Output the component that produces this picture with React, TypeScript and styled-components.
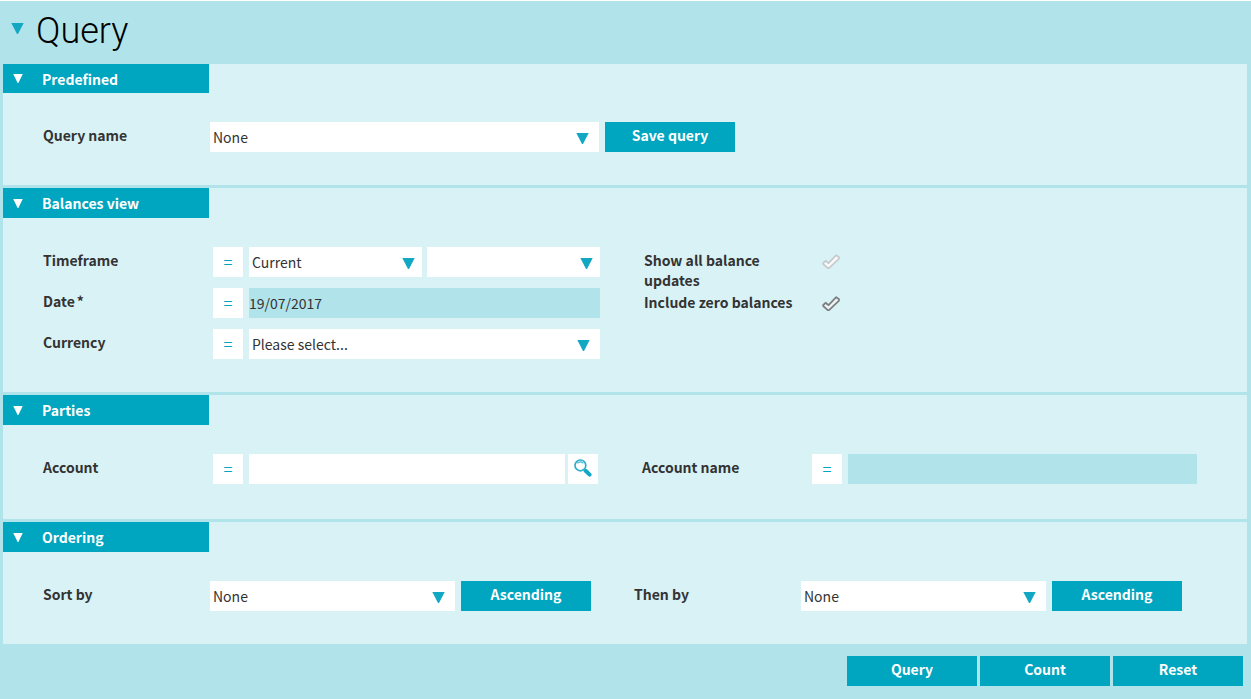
import React, { useId, useState } from "react";
import styled, { createGlobalStyle } from "styled-components";

const accent = "#00a5c0";
const pale = "#d9f2f6";
const tint = "#b1e4ea";

const GlobalStyle = createGlobalStyle`
  * { box-sizing: border-box; }
  body {
    margin: 0;
    background: ${tint};
    color: #333;
    font-family: "Noto Sans CJK SC", sans-serif;
    font-size: 14px;
    line-height: 20px;
  }
  button, input, select { font: inherit; color: inherit; border: 0; border-radius: 0; margin: 0; padding: 0; }
  button { cursor: pointer; }
`;

const Page = styled.form`
  min-height: 100vh;
  border-top: 1px solid #fff;
  background: ${tint};
`;

const TitleBar = styled.header`
  display: flex;
  align-items: flex-start;
  gap: 12px;
  height: 63px;
  padding-left: 11px;
`;

const TitleToggle = styled.button`
  display: flex;
  padding-top: 22px;
  background: none;
`;

const Title = styled.h1`
  margin: 0;
  padding-top: 8px;
  color: #000;
  font-family: Roboto, sans-serif;
  font-size: 36px;
  font-weight: 300;
  line-height: 44px;
`;

const Panels = styled.main`
  display: flex;
  flex-direction: column;
  gap: 3px;
  padding: 0 4px 0 3px;
`;

const Panel = styled.section`
  background: ${pale};
`;

const PanelHeading = styled.h2`
  margin: 0;
  font-size: 14px;
  line-height: 20px;
`;

const PanelToggle = styled.button<{ $compact?: boolean }>`
  display: flex;
  align-items: center;
  gap: 19px;
  width: 206px;
  height: ${(p) => (p.$compact ? 29 : 30)}px;
  padding-left: 10px;
  background: ${accent};
  color: #fff;
  font-weight: 700;
  text-align: left;
`;

const PanelBody = styled.div<{ $columns: string; $gap?: number; $end?: number; $bottom?: number }>`
  display: grid;
  grid-template-columns: ${(p) => p.$columns};
  column-gap: ${(p) => p.$gap ?? 44}px;
  padding: 29px ${(p) => p.$end ?? 0}px ${(p) => p.$bottom ?? 33}px 40px;
`;

const Stack = styled.div<{ $gap: number }>`
  display: flex;
  flex-direction: column;
  gap: ${(p) => p.$gap}px;
`;

const Field = styled.div`
  display: flex;
  align-items: flex-start;
  min-width: 0;
`;

const Label = styled.label<{ $width?: number }>`
  flex: none;
  width: ${(p) => p.$width ?? 167}px;
  padding-top: 3px;
  font-weight: 700;
`;

const Required = styled.span`
  margin-left: 2px;
`;

const Controls = styled.div<{ $gap?: number }>`
  display: flex;
  flex: 1;
  gap: ${(p) => p.$gap ?? 6}px;
  min-width: 0;
`;

const Operator = styled.button`
  flex: none;
  width: 30px;
  height: 30px;
  padding-bottom: 2px;
  background: #fff;
  color: ${accent};
  font-size: 16px;
`;

const TextInput = styled.input<{ $filled?: boolean }>`
  flex: 1;
  min-width: 0;
  width: 100%;
  height: 30px;
  background: ${(p) => (p.$filled ? tint : "#fff")};
`;

const IconButton = styled.button`
  display: flex;
  flex: none;
  align-items: center;
  justify-content: center;
  width: 30px;
  height: 30px;
  padding-bottom: 2px;
  background: #fff;
`;

const SelectBox = styled.div<{ $inset: number }>`
  position: relative;
  flex: 1;
  min-width: 0;

  select {
    display: block;
    width: 100%;
    height: 30px;
    padding: 0 30px 0 3px;
    appearance: none;
    background: #fff;
  }

  svg {
    position: absolute;
    top: 11px;
    right: ${(p) => p.$inset}px;
    pointer-events: none;
  }
`;

const ActionButton = styled.button`
  flex: none;
  width: 130px;
  height: 30px;
  padding-bottom: 4px;
  background: ${accent};
  color: #fff;
  font-weight: 700;
`;

const CheckList = styled.div`
  display: flex;
  flex-direction: column;
  gap: 2px;
  padding-top: 3px;
`;

const CheckRow = styled.div`
  display: flex;
  gap: 18px;
`;

const CheckLabel = styled.label`
  width: 160px;
  font-weight: 700;
`;

const CheckBox = styled.span`
  position: relative;
  width: 20px;
  height: 20px;
  padding-top: 4px;

  input {
    position: absolute;
    inset: 0;
    width: 20px;
    height: 20px;
    appearance: none;
    cursor: pointer;
  }

  svg { display: block; }
`;

const Footer = styled.footer`
  display: flex;
  justify-content: flex-end;
  gap: 3px;
  padding: 12px 8px 12px 0;
`;

function Triangle({ width = 13, height = 11, color = "#12a8c3" }: { width?: number; height?: number; color?: string }) {
  return (
    <svg width={width} height={height} viewBox="0 0 13 11" preserveAspectRatio="none" aria-hidden="true">
      <path d="M0.3 0H12.7L7 11H6Z" fill={color} />
    </svg>
  );
}

function Tick({ checked }: { checked: boolean }) {
  return (
    <svg width="18" height="16" viewBox="0 0 18 16" aria-hidden="true">
      <path
        d="M1.2 9L3.6 6.8L6.6 9.2L14.2 1.2L17 3.2V4.6L7 14.2H5.8L1.2 10Z"
        fill={checked ? "#f2f6f6" : "#fbfbfb"}
        stroke={checked ? "#7c8082" : "#c6cccd"}
        strokeWidth="1.8"
        strokeLinejoin="round"
      />
    </svg>
  );
}

function Magnifier() {
  return (
    <svg width="18" height="18" viewBox="0 0 18 18" aria-hidden="true">
      <path d="M11.6 11.8L15.6 15.6" stroke="#12a8c3" strokeWidth="4" strokeLinecap="round" />
      <circle cx="6.4" cy="6.4" r="5.4" fill="#fff" stroke="#2fb0c9" strokeWidth="1.7" />
      <path d="M3.2 4.2C5 2.8 7.6 2.8 9.4 4.2" fill="none" stroke="#5cc3d6" strokeWidth="1.3" />
    </svg>
  );
}

function Select({ id, label, options, inset = 10 }: { id?: string; label?: string; options: string[]; inset?: number }) {
  return (
    <SelectBox $inset={inset}>
      <select id={id} aria-label={label}>
        {options.map((o) => (
          <option key={o}>{o}</option>
        ))}
      </select>
      <Triangle />
    </SelectBox>
  );
}

function Section({ title, compact, children }: { title: string; compact?: boolean; children: React.ReactNode }) {
  const [open, setOpen] = useState(true);
  return (
    <Panel>
      <PanelHeading>
        <PanelToggle type="button" $compact={compact} aria-expanded={open} onClick={() => setOpen(!open)}>
          <Triangle width={10} height={9} color="#fff" />
          {title}
        </PanelToggle>
      </PanelHeading>
      {open && children}
    </Panel>
  );
}

function Check({ label, initial }: { label: string; initial: boolean }) {
  const id = useId();
  const [checked, setChecked] = useState(initial);
  return (
    <CheckRow>
      <CheckLabel htmlFor={id}>{label}</CheckLabel>
      <CheckBox>
        <Tick checked={checked} />
        <input id={id} type="checkbox" checked={checked} onChange={() => setChecked(!checked)} />
      </CheckBox>
    </CheckRow>
  );
}

function SortField({ id, label }: { id: string; label: string }) {
  const [ascending, setAscending] = useState(true);
  return (
    <Field>
      <Label htmlFor={id}>{label}</Label>
      <Controls>
        <Select id={id} options={["None"]} />
        <ActionButton type="button" onClick={() => setAscending(!ascending)}>
          {ascending ? "Ascending" : "Descending"}
        </ActionButton>
      </Controls>
    </Field>
  );
}

export default function App() {
  return (
    <Page onSubmit={(e) => e.preventDefault()}>
      <GlobalStyle />
      <TitleBar>
        <TitleToggle type="button" aria-label="Toggle query">
          <Triangle />
        </TitleToggle>
        <Title>Query</Title>
      </TitleBar>

      <Panels>
        <Section title="Predefined" compact>
          <PanelBody $columns="692fr 512fr" $gap={0}>
            <Field>
              <Label htmlFor="query-name">Query name</Label>
              <Controls>
                <Select id="query-name" options={["None"]} />
                <ActionButton type="button">Save query</ActionButton>
              </Controls>
            </Field>
          </PanelBody>
        </Section>

        <Section title="Balances view">
          <PanelBody $columns="557fr 553fr" $end={50}>
            <Stack $gap={11}>
              <Field>
                <Label $width={170} htmlFor="timeframe">Timeframe</Label>
                <Controls>
                  <Operator type="button" aria-label="Timeframe operator">=</Operator>
                  <Controls $gap={5}>
                    <Select id="timeframe" options={["Current"]} inset={7} />
                    <Select label="Timeframe period" options={[""]} inset={7} />
                  </Controls>
                </Controls>
              </Field>
              <Field>
                <Label $width={170} htmlFor="date">
                  Date<Required>*</Required>
                </Label>
                <Controls>
                  <Operator type="button" aria-label="Date operator">=</Operator>
                  <TextInput id="date" $filled defaultValue="19/07/2017" />
                </Controls>
              </Field>
              <Field>
                <Label $width={170} htmlFor="currency">Currency</Label>
                <Controls>
                  <Operator type="button" aria-label="Currency operator">=</Operator>
                  <Select id="currency" options={["Please select..."]} />
                </Controls>
              </Field>
            </Stack>
            <CheckList>
              <Check label="Show all balance updates" initial={false} />
              <Check label="Include zero balances" initial />
            </CheckList>
          </PanelBody>
        </Section>

        <Section title="Parties">
          <PanelBody $columns="1fr 1fr" $end={50} $bottom={35}>
            <Field>
              <Label $width={170} htmlFor="account">Account</Label>
              <Controls>
                <Operator type="button" aria-label="Account operator">=</Operator>
                <Controls $gap={3}>
                  <TextInput id="account" />
                  <IconButton type="button" aria-label="Find account">
                    <Magnifier />
                  </IconButton>
                </Controls>
              </Controls>
            </Field>
            <Field>
              <Label $width={170} htmlFor="account-name">Account name</Label>
              <Controls>
                <Operator type="button" aria-label="Account name operator">=</Operator>
                <TextInput id="account-name" $filled />
              </Controls>
            </Field>
          </PanelBody>
        </Section>

        <Section title="Ordering">
          <PanelBody $columns="1fr 1fr" $gap={43} $end={65}>
            <SortField id="sort-by" label="Sort by" />
            <SortField id="then-by" label="Then by" />
          </PanelBody>
        </Section>
      </Panels>

      <Footer>
        <ActionButton type="submit">Query</ActionButton>
        <ActionButton type="button">Count</ActionButton>
        <ActionButton type="reset">Reset</ActionButton>
      </Footer>
    </Page>
  );
}
